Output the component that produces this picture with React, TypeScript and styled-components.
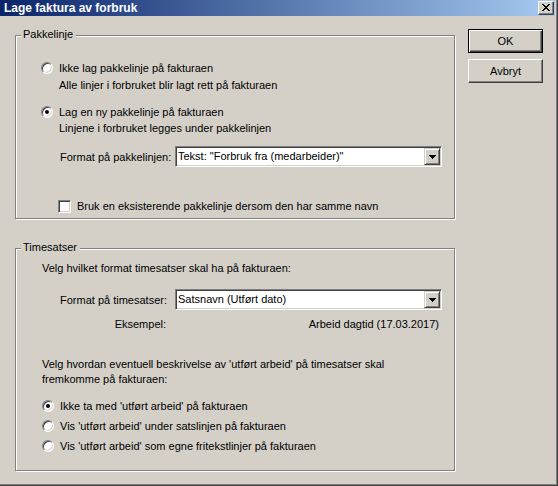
import React from "react";
import styled, { createGlobalStyle } from "styled-components";

const Global = createGlobalStyle`
  html, body { margin: 0; padding: 0; background: #d4d0c8; }
  body {
    font-family: "Liberation Sans", Arial, sans-serif;
    font-size: 11px;
    color: #000;
  }
  * { box-sizing: border-box; }
`;

/* ---------- window frame ---------- */

const Window = styled.div`
  width: 558px;
  height: 486px;
  background: #d4d0c8;
  border-right: 1px solid #404040;
  border-bottom: 1px solid #404040;
  box-shadow: inset -1px -1px 0 #808080;
  padding: 0 2px 2px 0;
  display: flex;
  flex-direction: column;
`;

const TitleBar = styled.div`
  height: 16px;
  flex: none;
  display: flex;
  align-items: flex-start;
  padding-left: 4px;
  background: linear-gradient(to right, #0a246a, #a6caf0);
`;

const TitleText = styled.div`
  flex: 1;
  font-weight: bold;
  font-size: 12px;
  line-height: 16px;
  color: #fff;
  white-space: nowrap;
`;

const CaptionButton = styled.div`
  width: 16px;
  height: 14px;
  margin: 1px 1px 0 0;
  background: #d4d0c8;
  border: 1px solid;
  border-color: #fff #404040 #404040 #fff;
  box-shadow: inset -1px -1px 0 #808080;
  display: flex;
  align-items: center;
  justify-content: center;
  padding: 0 1px 1px 0;
`;

const Body = styled.div`
  flex: 1;
  display: flex;
  align-items: flex-start;
  padding: 13px 0 0 15px;
  gap: 13px;
`;

const LeftColumn = styled.div`
  display: flex;
  flex-direction: column;
  padding-top: 6px;
  width: 440px;
`;

/* ---------- group boxes ---------- */

const GroupBox = styled.div<{ $height: number; $top: number; $left: number; $gapTop?: number }>`
  position: relative;
  height: ${(p) => p.$height}px;
  margin-top: ${(p) => p.$gapTop ?? 0}px;
  border: 1px solid #808080;
  box-shadow: 1px 1px 0 #fff, inset 1px 1px 0 #fff;
  padding: ${(p) => p.$top}px 0 0 ${(p) => p.$left}px;
  display: flex;
  flex-direction: column;
  align-items: flex-start;
`;

const GroupCaption = styled.span`
  position: absolute;
  top: -8px;
  left: 5px;
  padding: 0 3px 0 2px;
  line-height: 13px;
  background: #d4d0c8;
  white-space: nowrap;
`;

/* ---------- text and rows ---------- */

const Line = styled.div<{ $mt?: number; $ml?: number; $lh?: number }>`
  line-height: ${(p) => p.$lh ?? 16}px;
  margin-top: ${(p) => p.$mt ?? 0}px;
  margin-left: ${(p) => p.$ml ?? 0}px;
  white-space: nowrap;
`;

const OptionRow = styled.div<{ $mt?: number; $ml?: number; $h?: number }>`
  display: flex;
  align-items: center;
  gap: 6px;
  height: ${(p) => p.$h ?? 16}px;
  margin-top: ${(p) => p.$mt ?? 0}px;
  margin-left: ${(p) => p.$ml ?? 0}px;
  white-space: nowrap;
`;

const Radio = styled.span<{ $checked?: boolean }>`
  flex: none;
  width: 12px;
  height: 12px;
  border-radius: 50%;
  background: #fff;
  border: 1px solid;
  border-color: #808080 #fff #fff #808080;
  box-shadow: inset 1px 1px 0 #404040, inset -1px -1px 0 #d4d0c8;
  display: flex;
  align-items: center;
  justify-content: center;
  &::after {
    content: "";
    width: 4px;
    height: 4px;
    border-radius: 50%;
    background: #000;
    display: ${(p) => (p.$checked ? "block" : "none")};
  }
`;

const CheckBox = styled.span`
  flex: none;
  width: 13px;
  height: 13px;
  background: #fff;
  border: 1px solid;
  border-color: #808080 #fff #fff #808080;
  box-shadow: inset 1px 1px 0 #404040, inset -1px -1px 0 #d4d0c8;
`;

const FieldRow = styled.div<{ $mt?: number; $ml?: number }>`
  display: flex;
  align-items: center;
  margin-top: ${(p) => p.$mt ?? 0}px;
  margin-left: ${(p) => p.$ml ?? 0}px;
  white-space: nowrap;
`;

const FieldLabel = styled.span<{ $width: number; $right?: boolean }>`
  flex: none;
  width: ${(p) => p.$width}px;
  text-align: ${(p) => (p.$right ? "right" : "left")};
  line-height: 16px;
`;

const FieldValue = styled.span<{ $width: number; $ml: number }>`
  flex: none;
  width: ${(p) => p.$width}px;
  margin-left: ${(p) => p.$ml}px;
  text-align: right;
  line-height: 16px;
`;

const Combo = styled.div`
  flex: none;
  width: 267px;
  height: 21px;
  background: #fff;
  border: 1px solid;
  border-color: #808080 #fff #fff #808080;
  box-shadow: inset 1px 1px 0 #404040, inset -1px -1px 0 #d4d0c8;
  padding: 1px;
  display: flex;
  align-items: stretch;
`;

const ComboText = styled.span`
  flex: 1;
  padding-left: 1px;
  line-height: 17px;
  overflow: hidden;
`;

const ComboArrow = styled.span`
  flex: none;
  width: 16px;
  background: #d4d0c8;
  border: 1px solid;
  border-color: #d4d0c8 #404040 #404040 #d4d0c8;
  box-shadow: inset 1px 1px 0 #fff, inset -1px -1px 0 #808080;
  display: flex;
  align-items: center;
  justify-content: center;
  padding-top: 1px;
`;

/* ---------- push buttons ---------- */

const ButtonColumn = styled.div`
  display: flex;
  flex-direction: column;
  gap: 6px;
`;

const PushButton = styled.button<{ $default?: boolean }>`
  width: 75px;
  height: 24px;
  padding: 0;
  font-family: inherit;
  font-size: 11px;
  color: #000;
  background: #d4d0c8;
  border: 1px solid;
  border-color: ${(p) => (p.$default ? "#000" : "#fff #404040 #404040 #fff")};
  box-shadow: ${(p) =>
    p.$default
      ? "inset 1px 1px 0 #fff, inset -1px -1px 0 #404040, inset -2px -2px 0 #808080"
      : "inset -1px -1px 0 #808080"};
`;

/* ---------- glyphs ---------- */

const CloseGlyph = () => (
  <svg width="8" height="7" viewBox="0 0 8 7" shapeRendering="crispEdges">
    <g fill="#000">
      <rect x="0" y="0" width="2" height="1" />
      <rect x="6" y="0" width="2" height="1" />
      <rect x="1" y="1" width="2" height="1" />
      <rect x="5" y="1" width="2" height="1" />
      <rect x="2" y="2" width="4" height="1" />
      <rect x="3" y="3" width="2" height="1" />
      <rect x="2" y="4" width="4" height="1" />
      <rect x="1" y="5" width="2" height="1" />
      <rect x="5" y="5" width="2" height="1" />
      <rect x="0" y="6" width="2" height="1" />
      <rect x="6" y="6" width="2" height="1" />
    </g>
  </svg>
);

const DownArrow = () => (
  <svg width="7" height="4" viewBox="0 0 7 4" shapeRendering="crispEdges">
    <g fill="#000">
      <rect x="0" y="0" width="7" height="1" />
      <rect x="1" y="1" width="5" height="1" />
      <rect x="2" y="2" width="3" height="1" />
      <rect x="3" y="3" width="1" height="1" />
    </g>
  </svg>
);

const Select = ({ value }: { value: string }) => (
  <Combo>
    <ComboText>{value}</ComboText>
    <ComboArrow>
      <DownArrow />
    </ComboArrow>
  </Combo>
);

export default function App() {
  return (
    <>
      <Global />
      <Window>
        <TitleBar>
          <TitleText>Lage faktura av forbruk</TitleText>
          <CaptionButton>
            <CloseGlyph />
          </CaptionButton>
        </TitleBar>

        <Body>
          <LeftColumn>
            <GroupBox $height={184} $top={24} $left={25}>
              <GroupCaption>Pakkelinje</GroupCaption>
              <OptionRow>
                <Radio />
                <span>Ikke lag pakkelinje på fakturaen</span>
              </OptionRow>
              <Line $mt={1} $ml={18}>
                Alle linjer i forbruket blir lagt rett på fakturaen
              </Line>

              <OptionRow $mt={11}>
                <Radio $checked />
                <span>Lag en ny pakkelinje på fakturaen</span>
              </OptionRow>
              <Line $ml={18}>Linjene i forbruket legges under pakkelinjen</Line>

              <FieldRow $mt={10} $ml={19}>
                <FieldLabel $width={115}>Format på pakkelinjen:</FieldLabel>
                <Select value={'Tekst: "Forbruk fra (medarbeider)"'} />
              </FieldRow>

              <OptionRow $mt={31} $ml={17}>
                <CheckBox />
                <span>Bruk en eksisterende pakkelinje dersom den har samme navn</span>
              </OptionRow>
            </GroupBox>

            <GroupBox $height={223} $top={11} $left={26} $gapTop={29}>
              <GroupCaption>Timesatser</GroupCaption>
              <Line>Velg hvilket format timesatser skal ha på fakturaen:</Line>

              <FieldRow $mt={13}>
                <FieldLabel $width={125} $right>
                  Format på timesatser:
                </FieldLabel>
                <span style={{ width: 8, flex: "none" }} />
                <Select value="Satsnavn (Utført dato)" />
              </FieldRow>

              <FieldRow $mt={6}>
                <FieldLabel $width={124} $right>
                  Eksempel:
                </FieldLabel>
                <FieldValue $width={264} $ml={9}>
                  Arbeid dagtid (17.03.2017)
                </FieldValue>
              </FieldRow>

              <Line $mt={25} $lh={15}>
                Velg hvordan eventuell beskrivelse av 'utført arbeid' på timesatser skal
                <br />
                fremkomme på fakturaen:
              </Line>

              <OptionRow $mt={9} $h={20}>
                <Radio $checked />
                <span>Ikke ta med 'utført arbeid' på fakturaen</span>
              </OptionRow>
              <OptionRow $h={20}>
                <Radio />
                <span>Vis 'utført arbeid' under satslinjen på fakturaen</span>
              </OptionRow>
              <OptionRow $h={20}>
                <Radio />
                <span>Vis 'utført arbeid' som egne fritekstlinjer på fakturaen</span>
              </OptionRow>
            </GroupBox>
          </LeftColumn>

          <ButtonColumn>
            <PushButton $default>OK</PushButton>
            <PushButton>Avbryt</PushButton>
          </ButtonColumn>
        </Body>
      </Window>
    </>
  );
}
